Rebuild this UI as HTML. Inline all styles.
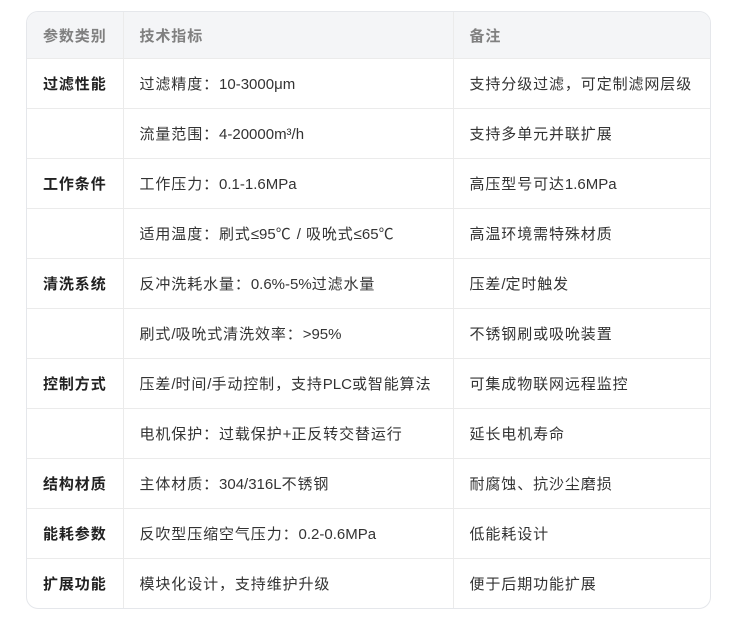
<!DOCTYPE html>
<html><head><meta charset="utf-8"><style>
body{margin:0;background:#fff;font-family:"Liberation Sans","Noto Sans CJK SC",sans-serif;}
.wrap{position:absolute;left:26px;top:11px;width:683px;border:1px solid #e5e7eb;border-radius:12px;overflow:hidden;}
table{border-collapse:collapse;width:100%;font-size:15px;letter-spacing:0.9px;color:#333;}
td,th{height:49px;padding:0 0 0 16px;text-align:left;border-top:1px solid #ebebeb;border-left:1px solid #ebebeb;white-space:nowrap;}
tr td:first-child,tr th:first-child{border-left:none;}
th{background:#f4f5f7;color:#808080;font-weight:600;height:46px;border-top:none;}
td.b{font-weight:bold;color:#222;}
i{font-style:normal;letter-spacing:0;}
</style></head><body>
<div class="wrap"><table>
<colgroup><col style="width:96px"><col style="width:330px"><col></colgroup>
<tr><th>参数类别</th><th>技术指标</th><th>备注</th></tr>
<tr><td class="b">过滤性能</td><td>过滤精度：<i>10-3000μm</i></td><td>支持分级过滤，可定制滤网层级</td></tr>
<tr><td></td><td>流量范围：<i>4-20000m³/h</i></td><td>支持多单元并联扩展</td></tr>
<tr><td class="b">工作条件</td><td>工作压力：<i>0.1-1.6MPa</i></td><td>高压型号可达<i>1.6MPa</i></td></tr>
<tr><td></td><td>适用温度：刷式<i>≤95</i>℃ <i>/</i> 吸吮式<i>≤65</i>℃</td><td>高温环境需特殊材质</td></tr>
<tr><td class="b">清洗系统</td><td>反冲洗耗水量：<i>0.6%-5%</i>过滤水量</td><td>压差<i>/</i>定时触发</td></tr>
<tr><td></td><td>刷式<i>/</i>吸吮式清洗效率：<i>&gt;95%</i></td><td>不锈钢刷或吸吮装置</td></tr>
<tr><td class="b">控制方式</td><td>压差<i>/</i>时间<i>/</i>手动控制，支持<i>PLC</i>或智能算法</td><td>可集成物联网远程监控</td></tr>
<tr><td></td><td>电机保护：过载保护<i>+</i>正反转交替运行</td><td>延长电机寿命</td></tr>
<tr><td class="b">结构材质</td><td>主体材质：<i>304/316L</i>不锈钢</td><td>耐腐蚀、抗沙尘磨损</td></tr>
<tr><td class="b">能耗参数</td><td>反吹型压缩空气压力：<i>0.2-0.6MPa</i></td><td>低能耗设计</td></tr>
<tr><td class="b">扩展功能</td><td>模块化设计，支持维护升级</td><td>便于后期功能扩展</td></tr>
</table></div>
</body></html>
